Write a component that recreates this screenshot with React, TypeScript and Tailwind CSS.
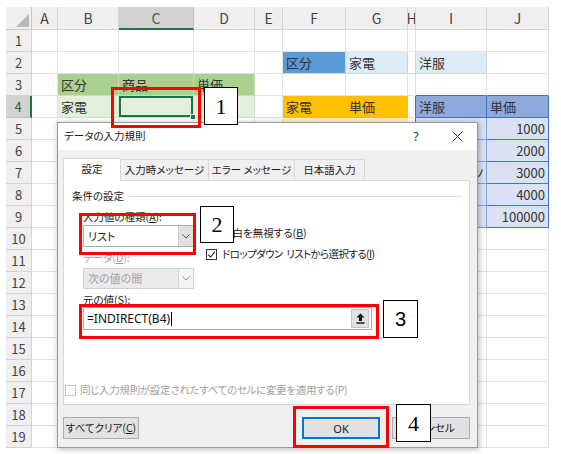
import React from 'react';

const COLS = ['A', 'B', 'C', 'D', 'E', 'F', 'G', 'H', 'I', 'J'];

type Cell = { c?: string; t?: string; r?: boolean; sel?: boolean };

const GREEN_H = 'bg-[#a9d08e] border-r border-b border-[#c5dfb3]';
const GREEN_L = 'bg-[#e2efda] border-r border-b border-[#d0e4c4]';
const LBLUE = 'bg-[#ddebf7] border-r border-b border-[#c9dcc0]';
const ORANGE = 'bg-[#ffc000] border-r border-b border-[#ffc000]';
const CREAM = 'bg-[#fff2cc] border-r border-b border-[#f3e2b3]';
const BLUE_H = 'bg-[#8ea9db] border-r border-b border-[#4472c4]';
const BLUE_L = 'bg-[#d9e1f2] border-r border-b border-[#7f9fd8]';
const BLUE_LAST = 'bg-[#d9e1f2] border-r border-b border-[#4472c4]';

const CELLS: Record<string, Cell> = {
  B3: { c: GREEN_H, t: '区分' },
  C3: { c: GREEN_H, t: '商品' },
  D3: { c: GREEN_H, t: '単価' },
  B4: { c: GREEN_L, t: '家電' },
  C4: { c: GREEN_L, sel: true },
  D4: { c: GREEN_L },
  F2: { c: 'bg-[#5b9bd5] border-r border-b border-[#c9dcc0]', t: '区分' },
  G2: { c: LBLUE, t: '家電' },
  H2: { c: 'bg-white border-r border-b border-[#c9dcc0]' },
  I2: { c: LBLUE, t: '洋服' },
  F4: { c: ORANGE, t: '家電' },
  G4: { c: ORANGE, t: '単価' },
  F5: { c: CREAM },
  G5: { c: CREAM },
  I3: { c: 'bg-white border-r border-b border-[#e1e1e1] border-b-[#4472c4]' },
  J3: { c: 'bg-white border-r border-b border-[#e1e1e1] border-b-[#4472c4]' },
  H4: { c: 'bg-white border-r border-b border-[#e1e1e1] border-r-[#4472c4]' },
  H5: { c: 'bg-white border-r border-b border-[#e1e1e1] border-r-[#4472c4]' },
  H6: { c: 'bg-white border-r border-b border-[#e1e1e1] border-r-[#4472c4]' },
  H7: { c: 'bg-white border-r border-b border-[#e1e1e1] border-r-[#4472c4]' },
  H8: { c: 'bg-white border-r border-b border-[#e1e1e1] border-r-[#4472c4]' },
  H9: { c: 'bg-white border-r border-b border-[#e1e1e1] border-r-[#4472c4]' },
  I4: { c: BLUE_H, t: '洋服' },
  J4: { c: BLUE_H, t: '単価' },
  I5: { c: BLUE_L, t: 'シャツ' },
  I6: { c: BLUE_L, t: 'ズボン' },
  I7: { c: BLUE_L, t: 'ワイシャツ' },
  I8: { c: BLUE_L, t: 'セーター' },
  I9: { c: BLUE_L, t: 'コート' },
  J5: { c: BLUE_LAST, t: '1000', r: true },
  J6: { c: BLUE_LAST, t: '2000', r: true },
  J7: { c: BLUE_LAST, t: '3000', r: true },
  J8: { c: BLUE_LAST, t: '4000', r: true },
  J9: { c: BLUE_LAST, t: '100000', r: true },
};

const DEFAULT_CELL = 'bg-white border-r border-b border-[#e1e1e1]';

function Chevron({ color = '#555' }: { color?: string }) {
  return (
    <svg width="8" height="5" viewBox="0 0 8 5">
      <path d="M0.5 0.5 L4 4 L7.5 0.5" fill="none" stroke={color} strokeWidth="1" />
    </svg>
  );
}

function CheckBox({ checked, disabled }: { checked?: boolean; disabled?: boolean }) {
  return (
    <span
      className={
        disabled
          ? 'w-[11px] h-[11px] border border-[#c4c4c4] bg-white flex items-center justify-center shrink-0'
          : 'w-[11px] h-[11px] border border-[#333333] bg-white flex items-center justify-center shrink-0'
      }
    >
      {checked && (
        <svg width="9" height="9" viewBox="0 0 9 9">
          <path d="M1.2 4.6 L3.6 7 L7.8 1.8" fill="none" stroke="#222" strokeWidth="1.1" />
        </svg>
      )}
    </span>
  );
}

function Sheet() {
  const rows = Array.from({ length: 19 }, (_, i) => i + 1);
  return (
    <div className="pt-[7px] pl-[6px]">
      <div className="grid grid-cols-[26px_26px_61px_75px_61px_28px_63px_62px_8px_71px_62px] grid-rows-[23px_repeat(19,22px)] w-[543px]">
        <div className="bg-[#efefef] border-r border-b border-[#c8c8c8] relative">
          <svg width="26" height="23" viewBox="0 0 26 23" className="absolute left-0 top-0">
            <polygon points="23,7 23,20 10,20" fill="#b9b9b9" />
          </svg>
        </div>
        {COLS.map((col) =>
          col === 'C' ? (
            <div
              key={col}
              className="bg-[#d2d2d2] border-r border-[#c0c0c0] border-b-2 border-b-[#217346] flex items-center justify-center text-[14px] text-[#1f6b3f] leading-none"
            >
              {col}
            </div>
          ) : (
            <div
              key={col}
              className="bg-[#efefef] border-r border-b border-[#d4d4d4] flex items-center justify-center text-[14px] text-[#444] leading-none overflow-hidden"
            >
              {col}
            </div>
          )
        )}
        {rows.map((r) => (
          <React.Fragment key={r}>
            {r === 4 ? (
              <div className="bg-[#d2d2d2] border-b border-[#c0c0c0] border-r-2 border-r-[#217346] flex items-center justify-center text-[13px] text-[#1f6b3f] leading-none">
                {r}
              </div>
            ) : (
              <div className="bg-[#efefef] border-r border-b border-[#d4d4d4] flex items-center justify-center text-[13px] text-[#444] leading-none">
                {r}
              </div>
            )}
            {COLS.map((col) => {
              const info = CELLS[col + r];
              const cls = info?.c ?? DEFAULT_CELL;
              return (
                <div
                  key={col + r}
                  className={
                    cls +
                    (info?.r
                      ? ' flex items-center justify-end pr-[3px] text-[13px] leading-none text-[#333] whitespace-nowrap'
                      : ' flex items-center pl-[3px] text-[13px] leading-none text-[#333] whitespace-nowrap') +
                    (info?.sel ? ' relative shadow-[inset_0_0_0_2px_#217346]' : '')
                  }
                >
                  {info?.t}
                  {info?.sel && (
                    <span className="absolute -right-[3px] -bottom-[3px] w-[6px] h-[6px] bg-[#217346] border border-white" />
                  )}
                </div>
              );
            })}
          </React.Fragment>
        ))}
      </div>
    </div>
  );
}

function Dialog() {
  return (
    <div className="absolute left-[57px] top-[122px] w-[421px] h-[326px] bg-[#f0f0f0] border border-[#9a9a9a] shadow-[1px_1px_6px_rgba(0,0,0,0.3)] flex flex-col text-[10.5px] leading-none text-[#1a1a1a] [font-feature-settings:'palt']">
      <div className="h-[27px] bg-white flex items-center pl-[6px] shrink-0">
        <span className="text-[10.5px]">データの入力規則</span>
        <span className="ml-auto w-[20px] text-center text-[12px] text-[#333] font-['Noto_Sans',sans-serif]">?</span>
        <span className="ml-[21px] mr-[10px] w-[20px] flex items-center justify-center">
          <svg width="11" height="11" viewBox="0 0 11 11">
            <path d="M0.5 0.5 L10.5 10.5 M10.5 0.5 L0.5 10.5" stroke="#333" strokeWidth="1" />
          </svg>
        </span>
      </div>
      <div className="flex-1 pl-[5px] pr-[7px] pt-[7px] flex flex-col">
        <div className="flex items-end h-[23px]">
          <div className="w-[58px] h-[23px] bg-white border-t border-l border-r border-[#d9d9d9] relative z-10 -mb-px flex items-center justify-center pb-[1px]">
            設定
          </div>
          <div className="w-[88px] h-[21px] border-t border-r border-[#d9d9d9] flex items-center justify-center">
            入力時メッセージ
          </div>
          <div className="w-[86px] h-[21px] border-t border-r border-[#d9d9d9] flex items-center justify-center">
            エラー メッセージ
          </div>
          <div className="w-[70px] h-[21px] border-t border-r border-[#d9d9d9] flex items-center justify-center">
            日本語入力
          </div>
        </div>
        <div className="w-[407px] h-[225px] bg-white border border-[#d9d9d9] flex flex-col shrink-0">
          <div className="mt-[8px] h-[14px] flex items-center pl-[8px] pr-[7px]">
            <span>条件の設定</span>
            <span className="flex-1 ml-[5px] h-px bg-[#dcdcdc]" />
          </div>
          <div className="flex pl-[19px]">
            <div className="w-[111px] flex flex-col">
              <div className="mt-[7px] h-[14px] flex items-center whitespace-nowrap">
                入力値の種類(<span className="underline">A</span>):
              </div>
              <div className="mt-[1px] h-[22px] border border-[#adadad] bg-white flex">
                <span className="flex-1 flex items-center pl-[4px] text-[11px]">リスト</span>
                <span className="w-[15px] bg-[#e1e1e1] border-l border-[#c8c8c8] flex items-center justify-center">
                  <Chevron />
                </span>
              </div>
              <div className="mt-[4px] h-[14px] flex items-center whitespace-nowrap text-[#a0a0a0]">
                データ(<span className="underline">D</span>):
              </div>
              <div className="mt-[3px] h-[21px] border border-[#d0d0d0] bg-[#eaeaea] flex">
                <span className="flex-1 flex items-center pl-[4px] text-[11px] text-[#a0a0a0]">次の値の間</span>
                <span className="w-[15px] bg-[#f4f4f4] border-l border-[#d6d6d6] flex items-center justify-center">
                  <Chevron color="#9a9a9a" />
                </span>
              </div>
            </div>
            <div className="ml-[12px] flex flex-col">
              <div className="mt-[23px] h-[14px] flex items-center gap-[5px] whitespace-nowrap">
                <CheckBox checked />
                <span>
                  空白を無視する(<span className="underline">B</span>)
                </span>
              </div>
              <div className="mt-[7px] h-[14px] flex items-center gap-[5px] whitespace-nowrap">
                <CheckBox checked />
                <span className="tracking-[-0.6px]">
                  ドロップダウン&nbsp;&nbsp;リストから選択する(<span className="underline">I</span>)
                </span>
              </div>
            </div>
          </div>
          <div className="pl-[19px]">
            <div className="mt-[4px] h-[14px] flex items-center whitespace-nowrap">
              元の値(<span className="underline">S</span>):
            </div>
            <div className="h-[23px] w-[289px] border border-[#adadad] bg-white flex items-center">
              <span className="pl-[3px] text-[12px] font-['Noto_Sans',sans-serif] text-[#111] [font-feature-settings:normal]">
                =INDIRECT(B4)
              </span>
              <span className="w-px h-[14px] bg-black ml-[1px]" />
              <span className="ml-auto mr-[2px] w-[18px] h-[19px] bg-[#e1e1e1] border border-[#c4c4c4] flex items-center justify-center">
                <svg width="9" height="11" viewBox="0 0 9 11">
                  <path d="M4.5 0.5 L8.5 4.5 H6 V8 H3 V4.5 H0.5 Z" fill="#111" />
                  <rect x="0.5" y="9.3" width="8" height="1.4" fill="#111" />
                </svg>
              </span>
            </div>
          </div>
          <div className="mt-[53px] h-[14px] flex items-center gap-[4px] pl-[1px] whitespace-nowrap text-[#a0a0a0]">
            <CheckBox disabled />
            <span className="tracking-[-0.3px]">同じ入力規則が設定されたすべてのセルに変更を適用する(P)</span>
          </div>
        </div>
        <div className="mt-[12px] flex">
          <div className="w-[76px] h-[22px] bg-[#e1e1e1] border border-[#adadad] flex items-center justify-center whitespace-nowrap">
            すべてクリア(<span className="underline">C</span>)
          </div>
          <div className="ml-auto w-[78px] h-[22px] bg-[#e1e1e1] border-2 border-[#0078d7] flex items-center justify-center font-['Noto_Sans',sans-serif] text-[11px]">
            OK
          </div>
          <div className="ml-[12px] w-[78px] h-[22px] bg-[#e1e1e1] border border-[#adadad] flex items-center justify-center">
            キャンセル
          </div>
        </div>
      </div>
    </div>
  );
}

function RedBox({ cls }: { cls: string }) {
  return <div className={'absolute border-[3px] border-[#ff0000] ' + cls} />;
}

export default function App() {
  return (
    <div className="relative w-[561px] h-[454px] bg-white overflow-hidden font-['Noto_Sans_CJK_JP','Noto_Sans',sans-serif]">
      <Sheet />
      <Dialog />
      <RedBox cls="left-[111px] top-[87px] w-[90px] h-[41px]" />
      <RedBox cls="left-[79px] top-[213px] w-[117px] h-[42px]" />
      <RedBox cls="left-[79px] top-[304px] w-[300px] h-[35px]" />
      <RedBox cls="left-[293px] top-[406px] w-[96px] h-[42px]" />
      <div className="absolute left-[204px] top-[87px] w-[34px] h-[38px] bg-white border border-black flex items-center justify-center text-[22px] font-['Liberation_Serif',serif]">
        1
      </div>
      <div className="absolute left-[200px] top-[206px] w-[34px] h-[37px] bg-white border border-black flex items-center justify-center text-[22px] font-['Liberation_Serif',serif]">
        2
      </div>
      <div className="absolute left-[383px] top-[300px] w-[35px] h-[38px] bg-white border border-black flex items-center justify-center text-[20px] font-['Liberation_Sans',sans-serif]">
        3
      </div>
      <div className="absolute left-[396px] top-[404px] w-[35px] h-[38px] bg-white border border-black flex items-center justify-center text-[22px] font-['Liberation_Serif',serif]">
        4
      </div>
    </div>
  );
}
